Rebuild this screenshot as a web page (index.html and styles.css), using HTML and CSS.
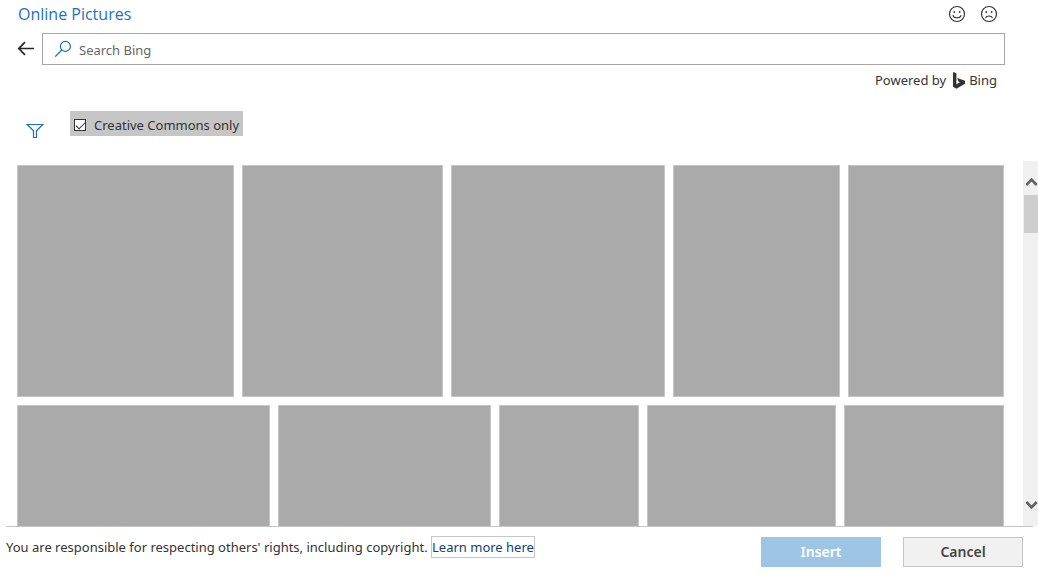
FILE: index.html
```html
<!DOCTYPE html>
<html lang="en">

<head>
  <meta charset="UTF-8">
  <meta name="viewport" content="width=device-width, initial-scale=1.0">
  <title>Online Pictures</title>
  <link rel="stylesheet" href="styles.css">
</head>

<body>

  <div class="dialog">
    <header class="title-bar">
      <h1 class="title">Online Pictures</h1>
      <div class="feedback">
        <button class="icon-btn" type="button" aria-label="Send a smile">
          <svg width="18" height="18" viewBox="0 0 18 18">
            <circle cx="9" cy="9" r="7.5" fill="none" stroke="#333" stroke-width="1.2" />
            <circle cx="6.3" cy="7" r="0.9" fill="#333" />
            <circle cx="11.7" cy="7" r="0.9" fill="#333" />
            <path d="M4.8 10.2C6 13.6 12 13.6 13.2 10.2" fill="none" stroke="#333" stroke-width="1.1" />
          </svg>
        </button>
        <button class="icon-btn" type="button" aria-label="Send a frown">
          <svg width="18" height="18" viewBox="0 0 18 18">
            <circle cx="9" cy="9" r="7.5" fill="none" stroke="#333" stroke-width="1.2" />
            <circle cx="6.3" cy="7" r="0.9" fill="#333" />
            <circle cx="11.7" cy="7" r="0.9" fill="#333" />
            <path d="M5.4 12.9C6.8 10.4 11.2 10.4 12.6 12.9" fill="none" stroke="#333" stroke-width="1.1" />
          </svg>
        </button>
      </div>
    </header>

    <form class="search-row">
      <button class="icon-btn back-btn" type="button" aria-label="Back">
        <svg width="18" height="16" viewBox="0 0 18 16">
          <path d="M17 7.5H2M8 1.1L1.8 7.5L8 13.9" fill="none" stroke="#262626" stroke-width="1.7" />
        </svg>
      </button>
      <div class="search-box">
        <svg class="search-icon" width="18" height="18" viewBox="0 0 18 18">
          <circle cx="11.4" cy="6.4" r="5" fill="none" stroke="#1a6fc4" stroke-width="1.2" />
          <path d="M7.8 10L1.2 16.6" fill="none" stroke="#1a6fc4" stroke-width="1.3" />
        </svg>
        <input class="search-input" type="text" placeholder="Search Bing" aria-label="Search Bing">
      </div>
    </form>

    <div class="powered">
      <span>Powered by</span>
      <svg class="bing-logo" width="12" height="17" viewBox="0 0 12 17">
        <path d="M0 0L3.4 1.2V12.2L7 10.2L5.4 9.4L4.2 6L12 8.7V11.8L3.4 16.8L0 14.8Z" fill="#333" />
      </svg>
      <span>Bing</span>
    </div>

    <div class="filter-row">
      <button class="icon-btn filter-btn" type="button" aria-label="Filter">
        <svg width="18" height="16" viewBox="0 0 18 16">
          <path d="M1.2 1.5H16.8L10.5 7.8V14.5H7.5V7.8Z" fill="none" stroke="#1a6fc4" stroke-width="1.2" />
        </svg>
      </button>
      <label class="cc-option">
        <input class="cc-check" type="checkbox" checked>
        <span>Creative Commons only</span>
      </label>
    </div>

    <main class="results">
      <div class="picture-list">
        <!-- flex-grow is the relative width of each picture -->
        <div class="picture-row">
          <div class="picture" style="flex-grow: 217"></div>
          <div class="picture" style="flex-grow: 201"></div>
          <div class="picture" style="flex-grow: 214"></div>
          <div class="picture" style="flex-grow: 167"></div>
          <div class="picture" style="flex-grow: 156"></div>
        </div>
        <div class="picture-row">
          <div class="picture" style="flex-grow: 253"></div>
          <div class="picture" style="flex-grow: 213"></div>
          <div class="picture" style="flex-grow: 140"></div>
          <div class="picture" style="flex-grow: 189"></div>
          <div class="picture" style="flex-grow: 160"></div>
        </div>
      </div>
      <div class="scrollbar">
        <button class="scroll-btn scroll-up" type="button" aria-label="Scroll up">
          <svg width="12" height="10" viewBox="0 0 12 10">
            <path d="M0.3 8L5.5 2.6L10.7 8" fill="none" stroke="#606060" stroke-width="2.6" />
          </svg>
        </button>
        <div class="scroll-thumb"></div>
        <button class="scroll-btn scroll-down" type="button" aria-label="Scroll down">
          <svg width="12" height="10" viewBox="0 0 12 10">
            <path d="M0.3 2L5.5 7.4L10.7 2" fill="none" stroke="#606060" stroke-width="2.6" />
          </svg>
        </button>
      </div>
    </main>

    <footer class="footer">
      <p class="notice">You are responsible for respecting others' rights, including copyright. <a class="learn-more" href="#">Learn more here</a></p>
      <div class="actions">
        <button class="btn btn-insert" type="button" disabled>Insert</button>
        <button class="btn btn-cancel" type="button">Cancel</button>
      </div>
    </footer>
  </div>

</body>

</html>
```

FILE: styles.css
```css
* {
  margin: 0;
  padding: 0;
  box-sizing: border-box;
}

body {
  font-family: "Segoe UI", "Noto Sans", "Open Sans", sans-serif;
  font-size: 13px;
  line-height: 20px;
  color: #333;
  background-color: #fff;
}

button,
input {
  font: inherit;
}

svg {
  display: block;
}

.dialog {
  display: flex;
  flex-direction: column;
  height: 100vh;
  overflow: hidden;
}

.icon-btn {
  border: none;
  background: none;
  cursor: pointer;
}

/* title */
.title-bar {
  display: flex;
  justify-content: space-between;
  align-items: center;
  height: 28px;
  margin-bottom: 5px;
  padding: 0 40px 0 18px;
}

.title {
  font-family: "Segoe UI", "Open Sans", sans-serif;
  font-size: 16px;
  font-weight: normal;
  color: #1e6fbe;
}

.feedback {
  display: flex;
  gap: 14px;
}

/* search */
.search-row {
  display: flex;
  align-items: center;
  gap: 7px;
  padding: 0 33px 0 17px;
}

.search-box {
  display: flex;
  flex: 1;
  align-items: center;
  gap: 7px;
  height: 32px;
  padding: 0 11px;
  border: 1px solid #a6a6a6;
}

.search-input {
  flex: 1;
  min-width: 0;
  padding-top: 2px;
  border: none;
  outline: none;
  background: none;
  color: #333;
}

.search-input::placeholder {
  color: #666;
  opacity: 1;
}

.powered {
  display: flex;
  justify-content: flex-end;
  align-items: center;
  height: 30px;
  padding-right: 41px;
}

.bing-logo {
  margin: 0 4px 0 7px;
}

/* filter */
.filter-row {
  display: flex;
  align-items: flex-start;
  gap: 26px;
  height: 66px;
  padding: 16px 26px 0;
}

.filter-btn {
  padding-top: 12px;
}

.cc-option {
  display: flex;
  align-items: center;
  gap: 8px;
  height: 25px;
  padding: 2px 4px 0;
  background-color: #c6c6c6;
}

.cc-check {
  appearance: none;
  display: grid;
  place-items: center;
  width: 12px;
  height: 12px;
  border: 1px solid #333;
  background-color: #fff;
}

.cc-check:checked::before {
  content: "";
  width: 8px;
  height: 4px;
  border: solid #333;
  border-width: 0 0 1px 1px;
  transform: rotate(-45deg);
}

/* results */
.results {
  display: flex;
  flex: 1;
  justify-content: space-between;
  min-height: 0;
}

.picture-list {
  display: flex;
  flex: 1;
  flex-direction: column;
  gap: 8px;
  padding: 4px 19px 0 17px;
  overflow: hidden;
}

.picture-row {
  display: flex;
  flex-shrink: 0;
  gap: 8px;
  height: 232px;
}

.picture {
  flex-basis: 0;
  background-color: #aaa;
  box-shadow: inset 0 0 0 1px #c6c6c6;
}

.scrollbar {
  display: flex;
  flex-direction: column;
  width: 15px;
  background-color: #f0f0f0;
}

.scroll-btn {
  padding-left: 3px;
  border: none;
  background: none;
}

.scroll-up {
  padding-top: 16px;
  padding-bottom: 8px;
}

.scroll-down {
  margin-top: auto;
  padding-bottom: 16px;
}

.scroll-thumb {
  height: 38px;
  margin-left: 1px;
  background-color: #cdcdcd;
}

/* footer */
.footer {
  display: flex;
  justify-content: space-between;
  height: 49px;
  margin: 0 5px 0 6px;
  padding-right: 10px;
  border-top: 1px solid #c6c6c6;
}

.notice {
  padding-top: 9px;
}

.learn-more {
  display: inline-block;
  border: 1px solid #c6c6c6;
  color: #0f3f7c;
  text-decoration: none;
}

.actions {
  display: flex;
  gap: 22px;
  padding-top: 10px;
}

.btn {
  width: 120px;
  height: 30px;
  border: none;
  font-size: 14px;
  font-weight: 600;
}

.btn-insert {
  background-color: #9fc5e6;
  color: #fff;
}

.btn-cancel {
  border: 1px solid #c6c6c6;
  background-color: #f1f1f1;
  color: #444;
}
```
